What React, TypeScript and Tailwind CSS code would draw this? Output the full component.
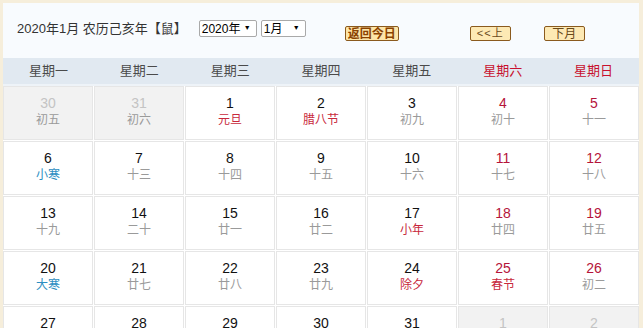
import React from "react";

type Cell = { d: number; l: string; kind?: "hol" | "term"; other?: boolean };

const cells: Cell[] = [
  { d: 30, l: "初五", other: true },
  { d: 31, l: "初六", other: true },
  { d: 1, l: "元旦", kind: "hol" },
  { d: 2, l: "腊八节", kind: "hol" },
  { d: 3, l: "初九" },
  { d: 4, l: "初十" },
  { d: 5, l: "十一" },
  { d: 6, l: "小寒", kind: "term" },
  { d: 7, l: "十三" },
  { d: 8, l: "十四" },
  { d: 9, l: "十五" },
  { d: 10, l: "十六" },
  { d: 11, l: "十七" },
  { d: 12, l: "十八" },
  { d: 13, l: "十九" },
  { d: 14, l: "二十" },
  { d: 15, l: "廿一" },
  { d: 16, l: "廿二" },
  { d: 17, l: "小年", kind: "hol" },
  { d: 18, l: "廿四" },
  { d: 19, l: "廿五" },
  { d: 20, l: "大寒", kind: "term" },
  { d: 21, l: "廿七" },
  { d: 22, l: "廿八" },
  { d: 23, l: "廿九" },
  { d: 24, l: "除夕", kind: "hol" },
  { d: 25, l: "春节", kind: "hol" },
  { d: 26, l: "初二" },
  { d: 27, l: "初三" },
  { d: 28, l: "初四" },
  { d: 29, l: "初五" },
  { d: 30, l: "初六" },
  { d: 31, l: "初七" },
  { d: 1, l: "初八", other: true },
  { d: 2, l: "初九", other: true },
];

const weekdays = ["星期一", "星期二", "星期三", "星期四", "星期五", "星期六", "星期日"];

export default function App() {
  return (
    <div
      className="w-[643px] h-[328px] overflow-hidden bg-white"
      style={{ fontFamily: '"Liberation Sans", "Noto Sans CJK SC", sans-serif' }}
    >
      <div className="border-l-[3px] border-t-[3px] border-r-[4px] border-[#f6eedb] h-full">
        <div className="h-[55px] bg-[#f8fbfe] flex items-center text-[13px] text-[#333]">
          <span className="ml-[14px] mt-[-4px]">2020年1月 农历己亥年【鼠】</span>
          <div className="ml-[12px] mt-[-4px] flex gap-[4px]">
            <div className="h-[17px] w-[58px] border border-[#a9a9a9] rounded-[2px] bg-white flex items-center justify-between pl-[2px] pr-[5px] text-[12px] text-black">
              <span>2020年</span>
              <span className="text-[7px]">▼</span>
            </div>
            <div className="h-[17px] w-[45px] border border-[#a9a9a9] rounded-[2px] bg-white flex items-center justify-between pl-[2px] pr-[5px] text-[12px] text-black">
              <span>1月</span>
              <span className="text-[7px]">▼</span>
            </div>
          </div>
          <div className="ml-[39px] mt-[6px] h-[15px] px-[2px] border border-[#8a5a1e] rounded-[2px] bg-[#fde5a8] text-[12px] font-bold text-[#8a4200] flex items-center leading-none">
            返回今日
          </div>
          <div className="ml-[71px] mt-[6px] h-[15px] w-[41px] border border-[#8a5a1e] rounded-[2px] bg-[#fde9b4] text-[11px] text-[#6a4a1a] flex items-center justify-center leading-none tracking-[1px]">
            &lt;&lt;上
          </div>
          <div className="ml-[33px] mt-[6px] h-[15px] w-[41px] border border-[#8a5a1e] rounded-[2px] bg-[#fde9b4] text-[12px] text-[#6a4a1a] flex items-center justify-center leading-none">
            下月
          </div>
        </div>
        <div className="h-[28px] bg-[#e1e9f1] border-b-[2px] border-[#eef3f8] grid grid-cols-7 text-[13px]">
          {weekdays.map((w, i) => (
            <div
              key={w}
              className={`flex items-center justify-center ${i >= 5 ? "text-[#c8102e]" : "text-[#4a4a4a]"}`}
            >
              {w}
            </div>
          ))}
        </div>
        <div className="grid grid-cols-7 gap-x-[1px] gap-y-[1px] bg-white">
          {cells.map((c, i) => {
            const weekend = i % 7 >= 5;
            const numColor = c.other ? "text-[#c4c4c4]" : weekend ? "text-[#b5143a]" : "text-[#111]";
            const lunarColor = c.other
              ? "text-[#9a9a9a]"
              : c.kind === "hol"
              ? "text-[#c8283c]"
              : c.kind === "term"
              ? "text-[#2c8ec2]"
              : "text-[#9a9a9a]";
            return (
              <div
                key={i}
                className={`h-[54px] border border-[#e6e6e6] flex flex-col items-center pt-[7px] ${
                  c.other ? "bg-[#f2f2f2]" : "bg-white"
                }`}
              >
                <span className={`text-[14px] leading-[18px] ${numColor}`}>{c.d}</span>
                <span className={`text-[12px] leading-[16px] ${lunarColor}`}>{c.l}</span>
              </div>
            );
          })}
        </div>
      </div>
    </div>
  );
}
